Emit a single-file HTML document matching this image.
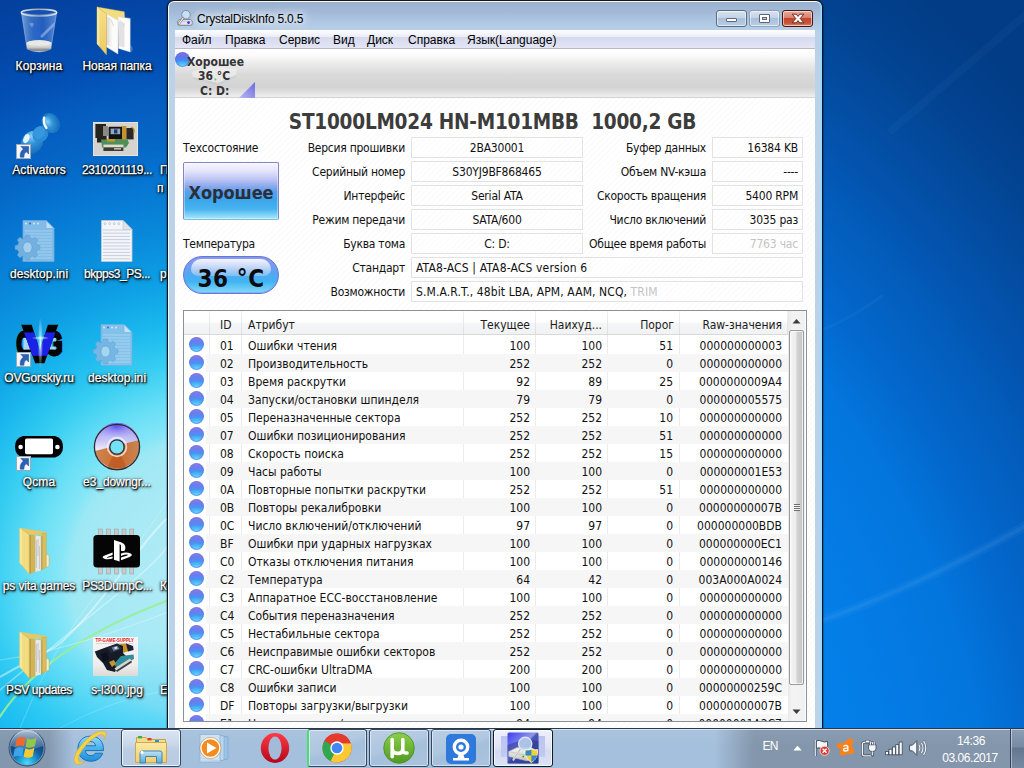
<!DOCTYPE html>
<html lang="ru">
<head>
<meta charset="utf-8">
<title>CrystalDiskInfo 5.0.5</title>
<style>
*{box-sizing:border-box;margin:0;padding:0}
html,body{width:1024px;height:768px;overflow:hidden}
body{position:relative;font-family:"Liberation Sans",sans-serif;font-size:12px;color:#000;background:#0b63c8}
.abs{position:absolute}
/* ---------- wallpaper ---------- */
#wall{position:absolute;left:0;top:0;width:1024px;height:768px;
 background:
  linear-gradient(180deg,rgba(20,190,248,0) 640px,rgba(20,190,248,.45) 740px),
  radial-gradient(circle 640px at 210px 578px,#b4ecf6 0px,#a4e9f5 120px,#9ce8f4 140px,#86e6f7 150px,#69dff6 177px,#38cef2 216px,#1ab8ee 256px,#0e9fe4 300px,#0989da 348px,#0676d2 398px,#0566c6 440px,#055cbf 484px,#034fb4 521px,#0444a4 580px,#033d98 640px);
}
#wallr{position:absolute;left:822px;top:0;width:202px;height:728px;
 background:radial-gradient(circle 1100px at -589px 855px,#0480ea 600px,#047de6 658px,#0375dc 758px,#0367cc 815px,#035bb8 893px,#0358b6 900px,#034696 1016px,#024290 1040px,#023c86 1100px);}
/* ---------- desktop icons ---------- */
.ico{position:absolute;width:90px;text-align:center;color:#fff;font-size:12px;line-height:14px;
 text-shadow:0 1px 2px #000,0 0 3px rgba(0,0,0,.9),1px 1px 2px rgba(0,0,0,.8);letter-spacing:-.2px;white-space:nowrap}
.ico svg{display:block;margin:0 auto}
/* ---------- window ---------- */
#win{position:absolute;left:167px;top:0px;width:656px;height:741px;border-radius:7px 7px 0 0;
 background:linear-gradient(180deg,#9ab1d0 1px,#a1b9d7 10px,#adc6e2 20px,#b8cfe8 29px,#bcd2e8 60px,#bcd2e8 100%);
 border:1px solid #06122a;border-top-color:#161616;box-shadow:inset 1px 0 0 #eaffff,inset 0 1px 0 #f4f8fc,inset -1px 0 0 #96dcf8,inset -2px 0 0 rgba(150,220,248,.55),-1px 0 1px rgba(0,0,0,.25),1px 0 1px rgba(0,0,0,.25)}
/* ---------- title bar ---------- */
#ttl{position:absolute;left:197px;top:11px;font-size:12px;line-height:16px;color:#000;letter-spacing:-.22px;text-shadow:0 0 6px #fff,0 0 10px #fff,0 0 14px rgba(255,255,255,.9)}
.cb{position:absolute;top:10px;height:17px;border:1px solid #5a6b82;border-radius:3px;box-shadow:inset 0 0 0 1px rgba(255,255,255,.55);
 background:linear-gradient(180deg,#d6e2f0 0%,#c3d3e6 45%,#a9bfda 50%,#b9cde6 100%)}
/* ---------- menu ---------- */
#menu{position:absolute;left:175px;top:30px;width:640px;height:19px;border-bottom:1px solid #b8bac6;
 background:linear-gradient(180deg,#ffffff 0px,#f3f4fb 4px,#e9ebf6 7px,#d5d9ed 7px,#dcdff1 12px,#e4e6f6 18px)}
#menu span{position:absolute;top:3px;line-height:15px;font-size:12px;letter-spacing:0}
/* ---------- toolbar ---------- */
#tb{position:absolute;left:175px;top:49px;width:640px;height:49px;border-bottom:1px solid #d2d2d2;
 background:linear-gradient(180deg,#ffffff 0px,#fbfbfb 6px,#ececec 14px,#d9d9d9 26px,#d3d3d3 38px,#e2e2e2 44px,#efefef 48px)}
.tbt{position:absolute;font-family:"DejaVu Sans Condensed","Liberation Sans",sans-serif;font-weight:bold;font-size:12px;line-height:14px;color:#333;white-space:nowrap}
/* ---------- main ---------- */
#main{position:absolute;left:175px;top:98px;width:640px;height:640px;
 background:#fff repeating-linear-gradient(135deg,rgba(0,0,0,0) 0px,rgba(0,0,0,0) 3px,rgba(0,0,0,.017) 3px,rgba(0,0,0,.017) 4.2px)}
.t{font-family:"DejaVu Sans Condensed","Liberation Sans",sans-serif;font-size:12px;white-space:nowrap;color:#111}
#model{position:absolute;left:175px;top:109px;width:640px;text-align:center;font-weight:bold;font-size:20.6px;line-height:26px;color:#3c3c3c;white-space:pre;text-indent:-5px;letter-spacing:-.25px}
.lb{position:absolute;width:160px;text-align:right;line-height:21px;letter-spacing:-.25px;margin-top:1px}
.vb{position:absolute;height:21px;line-height:21px;border:1px solid #e2e2e2;box-shadow:inset 1px 1px 0 rgba(255,255,255,.9),1px 1px 0 rgba(255,255,255,.9);text-align:center;letter-spacing:-.2px}
.vr{text-align:right;padding-right:4px}
.vl{text-align:left;padding-left:4px}
#good{position:absolute;left:183px;top:162px;width:96px;height:58px;border:1px solid #8484c4;border-bottom-color:#74bfe6;border-radius:2px;box-shadow:inset 0 0 0 1px rgba(255,255,255,.35);
 background:linear-gradient(180deg,#f6f5fd 0%,#e8e8fb 12%,#c2c8f4 28%,#93abee 40%,#5e9fe9 50%,#3ca4ea 65%,#45b4f0 82%,#7dd0f6 92%,#b0e6fa 100%);
 text-align:center;font-weight:bold;font-size:18px;line-height:59px;color:#2a2f3c;letter-spacing:-.1px}
#temp{position:absolute;left:183px;top:256px;width:96px;height:38px;border-radius:19px;border:1px solid #6878d6;
 background:linear-gradient(180deg,#8f9cf0 0%,#7d9af0 18%,#55a6f0 45%,#3fb4f3 68%,#86dafb 100%);
 box-shadow:inset 0 0 0 1px rgba(120,150,240,.6);
 text-align:center;font-weight:bold;font-size:24px;line-height:45px;color:#0c0c10;letter-spacing:.6px;overflow:hidden}
#temp:before{content:"";position:absolute;left:7px;top:2px;width:80px;height:17px;border-radius:14px 14px 10px 10px;background:linear-gradient(180deg,rgba(255,255,255,.9),rgba(255,255,255,.25))}
#temp b{position:relative}
/* ---------- table ---------- */
#tbl{position:absolute;left:183px;top:310px;width:624px;height:412px;border:1px solid #8a8f98;background:#fff;overflow:hidden}
#hd{position:absolute;left:0;top:0;width:604px;height:24px;border-bottom:1px solid #d9d9d9;background:linear-gradient(180deg,#fff 0%,#fff 45%,#f4f5f6 55%,#f1f2f4 100%)}
#hd i{position:absolute;top:0;width:1px;height:23px;background:linear-gradient(180deg,#f2f2f2,#dedede)}
#hd span{position:absolute;top:6px;line-height:17px;color:#1c1c1c}
.r{position:absolute;left:0;width:604px;height:18px;line-height:18px}
.r.e:before{content:"";position:absolute;left:22px;top:0;width:582px;height:18px;background:#f6f6f6}
.r span{position:absolute;top:1px;height:18px}
.r u{position:absolute;left:5px;top:1px;width:15px;height:15px;border-radius:50%;
 background:radial-gradient(ellipse 9px 7px at 50% 100%,rgba(110,225,255,.95) 0%,rgba(90,200,250,.5) 55%,rgba(90,200,250,0) 100%),linear-gradient(180deg,#8d7ee8 0%,#6c7dec 28%,#4a92f2 55%,#45aef7 78%,#5ccdfb 100%);box-shadow:inset 0 0 0 1px rgba(110,104,216,.5),inset 0 -1px 1px rgba(80,190,250,.9)}
.c1{left:36px}.c2{left:64px}
.c3{left:280px;width:66px;text-align:right}.c4{left:352px;width:66px;text-align:right}.c5{left:424px;width:65px;text-align:right}.c6{left:496px;width:102px;text-align:right}
#sb{position:absolute;left:604px;top:0;width:17px;height:410px;background:linear-gradient(90deg,#e9e9e9 0,#f3f3f3 4px,#f1f1f1 100%)}
#sb .th{position:absolute;left:1px;top:19px;width:15px;height:355px;border:1px solid #9a9a9a;border-radius:2px;box-shadow:inset 0 0 0 1px rgba(255,255,255,.7);
 background:linear-gradient(90deg,#f6f6f6 0%,#ececec 45%,#d2d2d2 55%,#c6c6c6 100%)}
#sb .gr{position:absolute;left:4px;top:173px;width:6px;height:7px;background:repeating-linear-gradient(180deg,#6b6b6b 0,#6b6b6b 1px,rgba(255,255,255,.8) 1px,rgba(255,255,255,.8) 2px)}
.vline{position:absolute;top:24px;width:1px;height:390px;background:#ececec}

/* ---------- taskbar ---------- */
#task{position:absolute;left:0;top:728px;width:1024px;height:40px;border-top:1px solid #2a3a4a;
 background:linear-gradient(90deg,#8297ad 0px,#8398af 48px,#a5c0dc 74px,#a5c0dc 714px,#8396ac 754px,#8396ac 1024px);
 box-shadow:inset 0 1px 0 rgba(225,235,248,.85)}
#task:after{content:"";position:absolute;left:0;top:1px;width:1024px;height:38px;background:linear-gradient(180deg,rgba(255,255,255,.05) 0,rgba(255,255,255,0) 45%)}
.tbn{position:absolute;top:729px;width:60px;height:38px;border:1px solid #35465e;border-radius:3px;box-shadow:inset 0 0 0 1px rgba(255,255,255,.5);
 background:linear-gradient(160deg,rgba(255,255,255,.2) 0%,rgba(255,255,255,.1) 45%,rgba(255,255,255,.0) 55%,rgba(255,255,255,.06) 100%)}
.tbn.act{background:linear-gradient(180deg,#dbe5f2 0%,#c8d7ea 40%,#bacde4 58%,#b8cbe3 100%);box-shadow:inset 0 0 0 1px rgba(255,255,255,.75)}
.tray{position:absolute;color:#fff;font-size:12px;white-space:nowrap;text-align:center;letter-spacing:-.2px}

.lbl{position:absolute;width:100px;text-align:center;color:#fff;font-size:12px;line-height:15px;white-space:nowrap;letter-spacing:0;-webkit-text-stroke:.25px #fff;
 text-shadow:1px 1px 1px rgba(0,0,0,.95),0 1px 2px rgba(0,0,0,.9),0 0 3px rgba(0,0,0,.8),1px 2px 3px rgba(0,0,0,.6)}
.sc{position:absolute;width:15px;height:15px;background:#f4f7fb;border:1px solid #9aa9bb}
</style>
</head>
<body>
<div id="wall"></div>
<div id="wallr"></div>
<!-- wallpaper streaks -->
<svg class="abs" style="left:0;top:380px" width="168" height="348" viewBox="0 380 168 348"><g fill="none" stroke-linecap="round"><path d="M-1 718 C38 658 108 623 169 600" stroke="#98ee96" stroke-width="2.2" opacity=".9"/><path d="M0 677 Q30 660 50 650 T120 575 T168 520" stroke="#fff" stroke-width="2" opacity=".45"/><path d="M0 690 Q60 640 110 600 T168 545" stroke="#fff" stroke-width="1.4" opacity=".4"/><path d="M20 728 Q50 650 100 590 T168 500" stroke="#fff" stroke-width="1" opacity=".22"/><path d="M0 660 Q70 650 168 612" stroke="#fff" stroke-width="1.2" opacity=".28"/><path d="M60 728 Q110 700 168 690" stroke="#fff" stroke-width="1" opacity=".18"/></g></svg>
<svg class="abs" style="left:822px;top:0" width="202" height="728" viewBox="0 0 202 728"><g fill="none" stroke="#9fd0ff" stroke-linecap="round"><path d="M-5 622 Q90 590 207 524" stroke-width="10" opacity=".05"/><path d="M-5 622 Q90 590 207 524" stroke-width="4" opacity=".08"/><path d="M70 130 Q140 70 207 12" stroke-width="8" opacity=".04"/><path d="M0 330 Q30 318 60 296" stroke-width="3" opacity=".05"/></g></svg>
<svg class="abs" style="left:18px;top:6px" width="42" height="50" viewBox="0 0 42 50"><defs><linearGradient id="rb" x1="0" y1="0" x2="1" y2="0"><stop offset="0" stop-color="#a9c6ee" stop-opacity=".7"/><stop offset=".25" stop-color="#5d8fdc" stop-opacity=".6"/><stop offset=".6" stop-color="#3a72d2" stop-opacity=".55"/><stop offset="1" stop-color="#7ea6e4" stop-opacity=".7"/></linearGradient><linearGradient id="rbm" x1="0" y1="0" x2="0" y2="1"><stop offset="0" stop-color="#f4f4f2"/><stop offset=".6" stop-color="#cfd0ce"/><stop offset=".85" stop-color="#7c7f84"/><stop offset="1" stop-color="#d8dadc"/></linearGradient><linearGradient id="rim" x1="0" y1="0" x2="1" y2="0"><stop offset="0" stop-color="#e6eaee"/><stop offset=".5" stop-color="#9aa4b0"/><stop offset="1" stop-color="#e6eaee"/></linearGradient></defs>
<path d="M3.4 6.6 L9.2 43 Q21 48.8 32.8 43 L38.6 6.6 Q21 11.6 3.4 6.6Z" fill="url(#rb)" stroke="#9dbbe6" stroke-width=".6"/><path d="M22 30 L36.6 16 L36 20 L24 32Z" fill="#c9dcf6" opacity=".45"/><path d="M12.6 20 Q16 16.4 18.6 20.6 Q22.6 22.6 22.4 27 Q24 30.6 21 33 L14.6 33 Q15.6 27 12.6 20Z" fill="#2a62c8" opacity=".6"/><path d="M11 17.6 Q14 15.6 16 18 L14 22Z" fill="#9cc0f0" opacity=".5"/>
<path d="M8.4 36.6 Q21 32 33.6 36.6 L32.8 43 Q21 48.8 9.2 43Z" fill="url(#rbm)"/><ellipse cx="21" cy="37" rx="12.2" ry="2.8" fill="#e9e9e6"/>
<ellipse cx="21" cy="6.6" rx="17.7" ry="3.4" fill="#3f78d2" fill-opacity=".3" stroke="url(#rim)" stroke-width="1.5"/></svg>
<div class="lbl" style="left:-11px;top:59px;letter-spacing:0.18px">Корзина</div>
<svg class="abs" style="left:95px;top:5px" width="42" height="52" viewBox="0 0 42 52"><defs><linearGradient id="fy" x1="0" y1="0" x2="0" y2="1"><stop offset="0" stop-color="#f6e08a"/><stop offset="1" stop-color="#eccb62"/></linearGradient><linearGradient id="pp" x1="0" y1="0" x2="1" y2="0"><stop offset="0" stop-color="#d9d7d5"/><stop offset=".5" stop-color="#f1f0ef"/><stop offset="1" stop-color="#ffffff"/></linearGradient></defs>
<path d="M2 2 L29.3 6.7 L29.7 13 L23 12 V16 L11.75 9.4Z" fill="#f3dc80" stroke="#dcc05c" stroke-width=".4"/>
<path d="M23 11.8 L35.2 13.4 V47 L23.5 43.4Z" fill="#fdfdfd" stroke="#dcdcdc" stroke-width=".4"/><path d="M24 16 L29.4 18.4 V42.6 L24 41Z" fill="#e3e2e0"/><path d="M24.4 15 Q28 17 29.4 21" stroke="#c9c8c6" stroke-width=".6" fill="none"/>
<path d="M11.75 9 L23 15.3 V49 L11.4 41.9Z" fill="#fbfbfa" stroke="#d6d6d6" stroke-width=".4"/><path d="M12.4 12 L18.6 16.6 V43.6 L12 39.6Z" fill="url(#pp)"/><path d="M13.6 12.4 Q17.4 16 18.6 21" stroke="#c4c2c0" stroke-width=".6" fill="none"/>
<path d="M2 2 L11.75 9 L11.4 49.7 L2 38.75Z" fill="url(#fy)" stroke="#dcbc54" stroke-width=".5"/><path d="M2 2 L4.4 3.8 V41.4 L2 38.75Z" fill="#faeca4" opacity=".8"/><path d="M35.2 40 Q40 43 36 47.6 L35.2 47Z" fill="#9cc4f0" opacity=".35"/></svg>
<div class="lbl" style="left:67px;top:59px;letter-spacing:-0.09px">Новая папка</div>
<svg class="abs" style="left:14px;top:110px" width="50" height="50" viewBox="0 0 50 50"><defs><radialGradient id="pn" cx=".3" cy=".3" r=".85"><stop offset="0" stop-color="#8fd0f4"/><stop offset=".4" stop-color="#2f93da"/><stop offset="1" stop-color="#1468b2"/></radialGradient></defs>
<ellipse cx="18" cy="32.6" rx="10.4" ry="12.6" transform="rotate(38 18 32.6)" fill="url(#pn)"/><ellipse cx="12.4" cy="28.6" rx="2.8" ry="4.8" transform="rotate(24 12.4 28.6)" fill="#f2faff" opacity=".92"/>
<ellipse cx="26.4" cy="24" rx="7.6" ry="8.6" transform="rotate(38 26.4 24)" fill="#2a8cd4"/><ellipse cx="25" cy="22.6" rx="5.6" ry="6.6" transform="rotate(38 25 22.6)" fill="#3a9ade" opacity=".8"/>
<ellipse cx="36.6" cy="13" rx="8.6" ry="10.6" transform="rotate(-32 36.6 13)" fill="#1f7cc6"/><ellipse cx="37.8" cy="13.4" rx="7" ry="9.4" transform="rotate(-32 37.8 13.4)" fill="url(#pn)"/><path d="M30.2 7.6 Q28.8 13 32.4 18" stroke="#f2faff" stroke-width="2.4" stroke-linecap="round" fill="none"/></svg>
<div class="sc" style="left:16px;top:144px"><svg width="13" height="13" viewBox="0 0 13 13" style="display:block"><path d="M3.8 1.4 H11.6 V9 L9.4 6.8 Q6.6 8.6 6.9 12.2 H3.3 Q2.6 6.8 6.4 4 Z" fill="#2b62b8" stroke="#1a4288" stroke-width=".5"/></svg></div>
<div class="lbl" style="left:-11px;top:163px;letter-spacing:0.08px">Activators</div>
<svg class="abs" style="left:93px;top:122px" width="45" height="34" viewBox="0 0 45 34"><rect width="45" height="34" fill="#d5d3d0" stroke="#f4f4f4" stroke-width="1"/><path d="M2.4 2 H13 V7 H10 V13 H13.6 V20.4 H4 V16 H2.4Z" fill="#24231f"/><path d="M10 4 H15 V14 H10Z" fill="#8a8880"/><rect x="15.6" y="4.8" width="15.6" height="12.8" rx="1" fill="#121210"/><rect x="17.6" y="6.6" width="9.6" height="5.6" fill="#8fa6c4"/><rect x="21" y="7.4" width="3.4" height="4" fill="#27376a"/><rect x="29" y="4" width="4.4" height="14" fill="#c6932c"/><path d="M33.4 6 H40.6 V17.4 H33.4Z" fill="#2b2723"/><path d="M38 5 Q42 6 41 11" stroke="#c6932c" stroke-width="1.2" fill="none"/><path d="M8 17.4 H34.6 L36 21 L33 25.4 H9 Z" fill="#4f9058"/><path d="M14 17 H22 V19.6 H14Z" fill="#c6932c"/><rect x="10.4" y="22.6" width="20" height="3" fill="#e0ddd2"/><rect x="10.4" y="25.4" width="20" height="3.6" fill="#3a3a34"/><rect x="21" y="26" width="7" height="1.6" fill="#b9b9b2"/></svg>
<div class="lbl" style="left:67px;top:163px;letter-spacing:-0.38px">2310201119...</div>
<svg class="abs" style="left:14px;top:219px" width="42" height="44" viewBox="0 0 42 44" opacity=".9"><path d="M9 1.5 H32 L40 9.5 V42.5 H9Z" fill="#8fc3ea" stroke="#78afdd" stroke-width=".8"/><path d="M32 1.5 V9.5 H40Z" fill="#d7e9f7" stroke="#78afdd" stroke-width=".6"/><g stroke="#b9daf2" stroke-width=".9"><path d="M11 12 H38 M11 15 H38 M11 18 H38 M11 21 H38 M11 24 H38 M11 27 H38 M11 30 H38 M11 33 H38 M11 36 H38 M11 39 H38"/></g><g fill="#e8f3fb"><circle cx="12" cy="4.6" r="1"/><circle cx="16" cy="4.6" r="1" fill="#2a6fd0"/><circle cx="20" cy="4.6" r="1"/><circle cx="24" cy="4.6" r="1"/></g>
<g transform="translate(13.5 28.5)"><path d="M-1.8 -12.4 H1.8 L2.6 -9.6 L5 -8.6 L7.6 -10.2 L10.2 -7.6 L8.6 -5 L9.6 -2.6 L12.4 -1.8 V1.8 L9.6 2.6 L8.6 5 L10.2 7.6 L7.6 10.2 L5 8.6 L2.6 9.6 L1.8 12.4 H-1.8 L-2.6 9.6 L-5 8.6 L-7.6 10.2 L-10.2 7.6 L-8.6 5 L-9.6 2.6 L-12.4 1.8 V-1.8 L-9.6 -2.6 L-8.6 -5 L-10.2 -7.6 L-7.6 -10.2 L-5 -8.6 L-2.6 -9.6Z" fill="#7fb6e2" stroke="#6aa4d6" stroke-width=".6"/><ellipse cx="0" cy="0" rx="4.6" ry="5.6" fill="#b5d8f2" stroke="#6aa4d6" stroke-width=".8"/></g></svg>
<div class="lbl" style="left:-11px;top:267px;letter-spacing:0.08px">desktop.ini</div>
<svg class="abs" style="left:100px;top:219px" width="34" height="44" viewBox="0 0 34 44"><path d="M1.5 1.5 H23 L32 10.5 V42.5 H1.5Z" fill="#f3f5f8" stroke="#c3cad3" stroke-width=".8"/><path d="M23 1.5 V10.5 H32Z" fill="#dfe4ea" stroke="#b9c1cb" stroke-width=".6"/><g stroke="#c7cfdc" stroke-width="1"><path d="M3 11 H30 M3 14.2 H30 M3 17.4 H30 M3 20.6 H30 M3 23.8 H30 M3 27 H30 M3 30.2 H30 M3 33.4 H30 M3 36.6 H30 M3 39.8 H30"/></g><g fill="none" stroke="#aab3bf" stroke-width=".6"><circle cx="5" cy="4.6" r="1"/><circle cx="9.6" cy="4.6" r="1"/><circle cx="14.2" cy="4.6" r="1"/><circle cx="18.8" cy="4.6" r="1"/></g></svg>
<div class="lbl" style="left:67px;top:267px;letter-spacing:-0.45px">bkpps3_PS...</div>
<svg class="abs" style="left:14px;top:316px" width="52" height="54" viewBox="0 0 52 54"><defs><radialGradient id="glow" cx=".5" cy=".5" r=".5"><stop offset="0" stop-color="#fff" stop-opacity=".95"/><stop offset=".4" stop-color="#dff" stop-opacity=".5"/><stop offset="1" stop-color="#fff" stop-opacity="0"/></radialGradient><clipPath id="band"><rect x="0" y="16.4" width="52" height="23.4"/></clipPath></defs>
<g font-family="Liberation Sans, sans-serif" font-weight="bold" stroke-linejoin="miter">
<text transform="translate(2.6 39.4) scale(.66 1)" font-size="33" fill="#040404" stroke="#040404" stroke-width="3.2">O</text>
<text transform="translate(31.4 39.4) scale(.66 1)" font-size="33" fill="#040404" stroke="#040404" stroke-width="3.2">G</text>
<rect x="9.4" y="22" width="8.4" height="11.6" fill="#a6d4f4"/><path d="M34 22 H41.8 V25.4 H37.6 V30.4 H41.8 V33.6 H34Z" fill="#a6d4f4"/>
<text x="8.8" y="46" font-size="51" fill="#040404" stroke="#040404" stroke-width="2.6">V</text>
<text x="8.8" y="46" font-size="51" fill="#1a22e6" stroke="#1a22e6" stroke-width="2.6" clip-path="url(#band)">V</text></g>
<ellipse cx="26.4" cy="27" rx="2.6" ry="26" fill="url(#glow)"/><ellipse cx="26.4" cy="22" rx="9" ry="2" fill="url(#glow)"/></svg>
<div class="sc" style="left:16px;top:352px"><svg width="13" height="13" viewBox="0 0 13 13" style="display:block"><path d="M3.8 1.4 H11.6 V9 L9.4 6.8 Q6.6 8.6 6.9 12.2 H3.3 Q2.6 6.8 6.4 4 Z" fill="#2b62b8" stroke="#1a4288" stroke-width=".5"/></svg></div>
<div class="lbl" style="left:-11px;top:371px;letter-spacing:-0.14px">OVGorskiy.ru</div>
<svg class="abs" style="left:92px;top:323px" width="42" height="44" viewBox="0 0 42 44" opacity=".9"><path d="M9 1.5 H32 L40 9.5 V42.5 H9Z" fill="#8fc3ea" stroke="#78afdd" stroke-width=".8"/><path d="M32 1.5 V9.5 H40Z" fill="#d7e9f7" stroke="#78afdd" stroke-width=".6"/><g stroke="#b9daf2" stroke-width=".9"><path d="M11 12 H38 M11 15 H38 M11 18 H38 M11 21 H38 M11 24 H38 M11 27 H38 M11 30 H38 M11 33 H38 M11 36 H38 M11 39 H38"/></g><g fill="#e8f3fb"><circle cx="12" cy="4.6" r="1"/><circle cx="16" cy="4.6" r="1" fill="#2a6fd0"/><circle cx="20" cy="4.6" r="1"/><circle cx="24" cy="4.6" r="1"/></g>
<g transform="translate(13.5 28.5)"><path d="M-1.8 -12.4 H1.8 L2.6 -9.6 L5 -8.6 L7.6 -10.2 L10.2 -7.6 L8.6 -5 L9.6 -2.6 L12.4 -1.8 V1.8 L9.6 2.6 L8.6 5 L10.2 7.6 L7.6 10.2 L5 8.6 L2.6 9.6 L1.8 12.4 H-1.8 L-2.6 9.6 L-5 8.6 L-7.6 10.2 L-10.2 7.6 L-8.6 5 L-9.6 2.6 L-12.4 1.8 V-1.8 L-9.6 -2.6 L-8.6 -5 L-10.2 -7.6 L-7.6 -10.2 L-5 -8.6 L-2.6 -9.6Z" fill="#7fb6e2" stroke="#6aa4d6" stroke-width=".6"/><ellipse cx="0" cy="0" rx="4.6" ry="5.6" fill="#b5d8f2" stroke="#6aa4d6" stroke-width=".8"/></g></svg>
<div class="lbl" style="left:67px;top:371px;letter-spacing:0.08px">desktop.ini</div>
<svg class="abs" style="left:14px;top:434px" width="50" height="26" viewBox="0 0 50 26"><path d="M9 2 H41 Q49 4 49 13 Q49 21 41 23.6 H9 Q1 21 1 13 Q1 4 9 2Z" fill="#000"/><rect x="11" y="4.6" width="28" height="15.6" rx="1.6" fill="#fff"/><circle cx="6.6" cy="13" r="2.3" fill="#fff"/><circle cx="43.4" cy="13" r="2.3" fill="#fff"/></svg>
<div class="sc" style="left:16px;top:456px"><svg width="13" height="13" viewBox="0 0 13 13" style="display:block"><path d="M3.8 1.4 H11.6 V9 L9.4 6.8 Q6.6 8.6 6.9 12.2 H3.3 Q2.6 6.8 6.4 4 Z" fill="#2b62b8" stroke="#1a4288" stroke-width=".5"/></svg></div>
<div class="lbl" style="left:-11px;top:475px;letter-spacing:0.1px">Qcma</div>
<svg class="abs" style="left:93px;top:423px" width="48" height="48" viewBox="0 0 48 48"><defs><linearGradient id="d1" x1="0" y1="0" x2="0" y2="1"><stop offset="0" stop-color="#6a5df0"/><stop offset=".5" stop-color="#b9b4f4"/><stop offset="1" stop-color="#f3f1fb"/></linearGradient><linearGradient id="d2" x1="0" y1="0" x2="1" y2="0"><stop offset="0" stop-color="#c98a5a"/><stop offset=".5" stop-color="#d2682a"/><stop offset="1" stop-color="#c48858"/></linearGradient><radialGradient id="d3" cx=".5" cy=".1" r=".6"><stop offset="0" stop-color="#5b4bf0"/><stop offset="1" stop-color="#fff" stop-opacity="0"/></radialGradient></defs>
<circle cx="24" cy="24" r="22.6" fill="#f2f0fa"/><path d="M2 28 A22.6 22.6 0 0 1 46 17 L24 24Z" fill="url(#d1)"/><path d="M2 28 A22.6 22.6 0 0 1 46 17 L24 24Z" fill="url(#d3)"/><path d="M1.8 28 L46.2 17 A22.6 22.6 0 0 1 1.8 28Z" fill="url(#d2)"/><path d="M24 24 L14 45 A22.6 22.6 0 0 0 34 45Z" fill="#b5521c" opacity=".55"/><circle cx="24" cy="24" r="22.6" fill="none" stroke="#2c2c30" stroke-width="1.3"/><circle cx="24" cy="24" r="9.4" fill="none" stroke="#f4f2fb" stroke-width="1.6" opacity=".8"/><circle cx="24" cy="24" r="7.2" fill="#74e1f6" stroke="#2c2c30" stroke-width="1.3"/></svg>
<div class="lbl" style="left:67px;top:475px;letter-spacing:-0.08px">e3_downgr...</div>
<svg class="abs" style="left:17px;top:526px" width="34" height="50" viewBox="0 0 34 50"><path d="M2.7 1.8 L29.3 6.1 V9.4 L12.1 8.8Z" fill="#e4c766"/><path d="M25.4 7 L29.3 7.6 V41 L25.4 43.4Z" fill="#dcbc5c" stroke="#c4a248" stroke-width=".4"/><path d="M29.3 28 L32 29.6 V40 L29.3 41.4Z" fill="#f6eec8" stroke="#c8a850" stroke-width=".5"/><path d="M23.8 10.2 L25.6 10.4 V44 L23.8 44.6Z" fill="#c8a64a"/><path d="M18.3 9.6 L23.8 10.2 V44.6 L18.3 46Z" fill="#ebe9e8"/><path d="M19.4 14 V42 M21 13 V30 M22.4 20 V43" stroke="#a9aab4" stroke-width=".7" opacity=".8"/><path d="M12.1 8.8 L18.3 9.4 V46 L12.1 47.9Z" fill="#d4b256"/><path d="M12.1 8.8 L14 9 V47.3 L12.1 47.9Z" fill="#b9963e" opacity=".7"/><path d="M2.7 1.8 L12.1 8.8 V47.9 L2.7 37Z" fill="#f2dd82" stroke="#dcbc54" stroke-width=".5"/><path d="M2.7 1.8 L5 3.6 V39.6 L2.7 37Z" fill="#f8ea9e" opacity=".8"/></svg>
<div class="lbl" style="left:-11px;top:579px;letter-spacing:-0.13px">ps vita games</div>
<svg class="abs" style="left:92px;top:528px" width="50" height="47" viewBox="0 0 50 47"><g fill="#c9c9c9" stroke="#9a9a9a" stroke-width=".5"><rect x="6.6" y="1" width="4" height="45"/><rect x="14.4" y="1" width="4" height="45"/><rect x="22.2" y="1" width="4" height="45"/><rect x="30" y="1" width="4" height="45"/><rect x="37.8" y="1" width="4" height="45"/></g><rect x="1.4" y="7" width="46.6" height="32.6" rx="3.6" fill="#050505"/>
<path d="M22 12 L29.6 14.4 Q33.6 16 33.4 20.4 Q33 24 29 22.8 V17.6 Q28.8 16.4 27.6 16.2 V33.6 L22 31.8Z" fill="#fff"/><path d="M20.6 24.6 L12 27.8 Q9 29.4 12.4 30.8 Q16 32 20.6 30.6 V28.4 L15.6 29.8 Q14 29.8 15.4 29 L20.6 27Z" fill="#fff"/><path d="M29 25.4 Q34.6 23.6 38.6 25.6 Q41.6 27.4 37.6 29 L29 32.2 V29.6 L35.4 27.4 Q36.4 26.8 35 26.6 Q32.6 26.6 29 28Z" fill="#fff"/></svg>
<div class="lbl" style="left:67px;top:579px;letter-spacing:-0.35px">PS3DumpC...</div>
<svg class="abs" style="left:17px;top:630px" width="34" height="50" viewBox="0 0 34 50"><path d="M2.7 1.8 L29.3 6.1 V9.4 L12.1 8.8Z" fill="#e4c766"/><path d="M25.4 7 L29.3 7.6 V41 L25.4 43.4Z" fill="#dcbc5c" stroke="#c4a248" stroke-width=".4"/><path d="M29.3 28 L32 29.6 V40 L29.3 41.4Z" fill="#f6eec8" stroke="#c8a850" stroke-width=".5"/><path d="M23.8 10.2 L25.6 10.4 V44 L23.8 44.6Z" fill="#c8a64a"/><path d="M18.3 9.6 L23.8 10.2 V44.6 L18.3 46Z" fill="#ebe9e8"/><path d="M19.4 14 V42 M21 13 V30 M22.4 20 V43" stroke="#a9aab4" stroke-width=".7" opacity=".8"/><path d="M12.1 8.8 L18.3 9.4 V46 L12.1 47.9Z" fill="#d4b256"/><path d="M12.1 8.8 L14 9 V47.3 L12.1 47.9Z" fill="#b9963e" opacity=".7"/><path d="M2.7 1.8 L12.1 8.8 V47.9 L2.7 37Z" fill="#f2dd82" stroke="#dcbc54" stroke-width=".5"/><path d="M2.7 1.8 L5 3.6 V39.6 L2.7 37Z" fill="#f8ea9e" opacity=".8"/></svg>
<div class="lbl" style="left:-11px;top:683px;letter-spacing:-0.37px">PSV updates</div>
<svg class="abs" style="left:93px;top:637px" width="45" height="39" viewBox="0 0 45 39"><defs><linearGradient id="tbg" x1="0" y1="0" x2="0" y2="1"><stop offset="0" stop-color="#f8f7f5"/><stop offset=".7" stop-color="#efeeec"/><stop offset="1" stop-color="#dcdad7"/></linearGradient></defs><rect width="45" height="39" fill="url(#tbg)"/><text x="2.6" y="5.4" font-family="Liberation Sans, sans-serif" font-weight="bold" font-size="4.8" fill="#e02222" textLength="38.4" lengthAdjust="spacingAndGlyphs">TP-GAME-SUPPLY</text><path d="M3 6.6 H40" stroke="#b9b4b0" stroke-width=".5"/>
<path d="M27 7 L34 6.4 L36 14 L30 16Z" fill="#c8922a"/><path d="M33 6.4 L40 9 L40.6 13 L35 14.6Z" fill="#1c2130"/>
<path d="M1.8 14.6 L14 10 L24 6.6 L30 9 L30 16 L34 20 L26 27 L22 35 L14 33 L10 26 L4 20Z" fill="#161b28"/><path d="M14 10.4 L25 7 L29 12 L18 16.6Z" fill="#232a3c"/><path d="M18.6 10.6 L24.4 8.8 L26.4 12 L20.6 14Z" fill="#6c7f98"/><path d="M21 10.4 L23.6 9.6 L24.6 11.4 L22 12.2Z" fill="#dfe6ee"/><path d="M8 17 L14 15 L16 22 L10 25Z" fill="#0d111b"/>
<path d="M28 19 L40.6 17.6 L41 22 L30 27 L24 31 L21 27Z" fill="#2f8e9c"/><path d="M16 25 L21 23 L23 27 L19 30Z" fill="#c8922a"/><path d="M21.6 31.2 L37 21.4 L38.4 23.6 L23 33.6Z" fill="#d9d6cc"/><path d="M23 33.6 L38.4 23.6 L38.8 25.4 L24 35Z" fill="#3b3f44"/></svg>
<div class="lbl" style="left:67px;top:683px;letter-spacing:-0.03px">s-l300.jpg</div>
<div class="lbl" style="left:160px;top:163px;width:auto;text-align:left">П</div>
<div class="lbl" style="left:160px;top:267px;width:auto;text-align:left">р</div>
<div class="lbl" style="left:160px;top:579px;width:auto;text-align:left">К</div>
<div class="lbl" style="left:160px;top:683px;width:auto;text-align:left">Е</div>
<div class="lbl" style="left:157px;top:181px;width:auto;text-align:left">п</div>
<div id="win"></div>
<svg class="abs" style="left:177px;top:10px" width="16" height="16" viewBox="0 0 16 16"><path d="M.8 13.8 V11 L2.6 9.4 H13.4 L15.2 11 V13.8 Q15.2 15.3 13.8 15.3 H2.2 Q.8 15.3 .8 13.8Z" fill="#e6e4ea" stroke="#787884" stroke-width=".9"/><path d="M1.2 11.2 H14.8" stroke="#b9b9c4" stroke-width=".6"/><circle cx="11.6" cy="12.6" r="1.35" fill="#2a2cf0"/><circle cx="9" cy="4.7" r="4.3" fill="#cfe4f8" fill-opacity=".85" stroke="#7e8ca4" stroke-width="1"/><path d="M6.2 8 L2 13.6" stroke="#6f7480" stroke-width="2.2" stroke-linecap="round"/><path d="M6.2 8 L2 13.6" stroke="#f4f4f6" stroke-width="1.1" stroke-linecap="round"/></svg>
<div id="ttl">CrystalDiskInfo 5.0.5</div>
<div class="cb" style="left:716px;width:31px"><div class="abs" style="left:9px;top:7px;width:11px;height:4px;background:#fff;border:1px solid #5b6678;border-radius:1px"></div></div>
<div class="cb" style="left:749px;width:31px;border-color:rgba(90,107,130,.5)"><div class="abs" style="left:9px;top:3px;width:11px;height:9px;background:#fff;border:1px solid #5b6678;border-radius:1px"><div class="abs" style="left:2px;top:2px;width:5px;height:3px;border:1px solid #5b6678;background:#c3d3e6"></div></div></div>
<div class="cb" style="left:782px;width:31px;border-color:#4a1710;background:linear-gradient(180deg,#e9a99b 0%,#d9826f 45%,#c4452d 50%,#c8543a 80%,#d9866b 100%)"><svg class="abs" style="left:8px;top:2px" width="14" height="11" viewBox="0 0 14 11"><path d="M1.2 1.2 H5.2 L7 3.4 L8.8 1.2 H12.8 L9.2 5.5 L12.8 9.8 H8.8 L7 7.6 L5.2 9.8 H1.2 L4.8 5.5 Z" fill="#fff" stroke="#5a2018" stroke-width=".9"/></svg></div>
<div id="menu"><span style="left:7px">Файл</span><span style="left:50px">Правка</span><span style="left:104px">Сервис</span><span style="left:158px">Вид</span><span style="left:192px">Диск</span><span style="left:233px">Справка</span><span style="left:292px">Язык(Language)</span></div>
<div id="tb"></div>
<div class="abs" style="left:175px;top:52px;width:15px;height:15px;border-radius:50%;background:radial-gradient(ellipse 9px 7px at 50% 100%,rgba(110,225,255,.95) 0%,rgba(90,200,250,.5) 55%,rgba(90,200,250,0) 100%),linear-gradient(180deg,#8674e6 0%,#6573ea 28%,#4389f1 55%,#3fa8f6 78%,#52c8fa 100%);box-shadow:inset 0 0 0 1px rgba(104,96,214,.6)"></div>
<svg class="abs" style="left:190px;top:66px" width="50" height="20" viewBox="0 0 50 20"><path d="M2 6 L20 1 L47 3 L46 9 L28 17 L3 11Z" fill="#f4f4f4" opacity=".55"/><path d="M3 11 L28 17 L46 9 L46 11.6 L28 19.4 L3 13.4Z" fill="#c9c9c9" opacity=".5"/><circle cx="25.4" cy="13.4" r="1.1" fill="#5fbf4f" opacity=".8"/></svg>
<div class="tbt" style="left:187px;top:55px">Хорошее</div>
<div class="tbt" style="left:198px;top:69px">36 °C</div>
<div class="tbt" style="left:200px;top:84px">C: D:</div>
<svg class="abs" style="left:239px;top:82px" width="16" height="16" viewBox="0 0 16 16"><defs><linearGradient id="tg" x1="0" y1="1" x2="1" y2="0"><stop offset="0" stop-color="#b9b9ee"/><stop offset="1" stop-color="#6a6adf"/></linearGradient></defs><path d="M0 16 L16 16 L16 0 Z" fill="url(#tg)"/></svg>
<div id="main"></div>
<div id="model" class="t">ST1000LM024 HN-M101MBB  1000,2 GB</div>
<div class="t lb" style="left:99px;top:137px;text-align:left;left:183px">Техсостояние</div>
<div id="good" class="t">Хорошее</div>
<div class="t lb" style="left:183px;top:233px;text-align:left">Температура</div>
<div id="temp" class="t"><b>36 °C</b></div>
<div class="t lb" style="left:245px;top:137px">Версия прошивки</div><div class="t vb" style="left:411px;top:137px;width:172px">2BA30001</div><div class="t lb" style="left:546px;top:137px">Буфер данных</div><div class="t vb vr" style="left:712px;top:137px;width:91px"><span>16384 KB</span></div>
<div class="t lb" style="left:245px;top:161px">Серийный номер</div><div class="t vb" style="left:411px;top:161px;width:172px">S30YJ9BF868465</div><div class="t lb" style="left:546px;top:161px">Объем NV-кэша</div><div class="t vb vr" style="left:712px;top:161px;width:91px"><span>----</span></div>
<div class="t lb" style="left:245px;top:185px">Интерфейс</div><div class="t vb" style="left:411px;top:185px;width:172px">Serial ATA</div><div class="t lb" style="left:546px;top:185px">Скорость вращения</div><div class="t vb vr" style="left:712px;top:185px;width:91px"><span>5400 RPM</span></div>
<div class="t lb" style="left:245px;top:209px">Режим передачи</div><div class="t vb" style="left:411px;top:209px;width:172px">SATA/600</div><div class="t lb" style="left:546px;top:209px">Число включений</div><div class="t vb vr" style="left:712px;top:209px;width:91px"><span>3035 раз</span></div>
<div class="t lb" style="left:245px;top:233px">Буква тома</div><div class="t vb" style="left:411px;top:233px;width:172px">C: D:</div><div class="t lb" style="left:546px;top:233px">Общее время работы</div><div class="t vb vr" style="left:712px;top:233px;width:91px"><span style="color:#c4c4c4">7763 час</span></div>
<div class="t lb" style="left:245px;top:257px">Стандарт</div><div class="t vb vl" style="left:411px;top:257px;width:392px;letter-spacing:.15px;word-spacing:0">ATA8-ACS | ATA8-ACS version 6</div>
<div class="t lb" style="left:245px;top:281px">Возможности</div><div class="t vb vl" style="left:411px;top:281px;width:392px;letter-spacing:.1px">S.M.A.R.T., 48bit LBA, APM, AAM, NCQ, <span style="color:#c4c4c4">TRIM</span></div>
<div id="tbl" class="t"><div id="hd"><i style="left:25px"></i><i style="left:57px"></i><i style="left:279px"></i><i style="left:351px"></i><i style="left:423px"></i><i style="left:495px"></i><i style="left:603px"></i><span class="c1">ID</span><span class="c2">Атрибут</span><span class="c3">Текущее</span><span class="c4">Наихуд...</span><span class="c5" style="width:66px">Порог</span><span class="c6">Raw-значения</span></div>
<div class="vline" style="left:25px"></div><div class="vline" style="left:57px"></div><div class="vline" style="left:279px"></div><div class="vline" style="left:351px"></div><div class="vline" style="left:423px"></div><div class="vline" style="left:495px"></div>
<div class="r" style="top:25px"><u></u><span class="c1">01</span><span class="c2">Ошибки чтения</span><span class="c3">100</span><span class="c4">100</span><span class="c5">51</span><span class="c6">000000000003</span></div>
<div class="r e" style="top:43px"><u></u><span class="c1">02</span><span class="c2">Производительность</span><span class="c3">252</span><span class="c4">252</span><span class="c5">0</span><span class="c6">000000000000</span></div>
<div class="r" style="top:61px"><u></u><span class="c1">03</span><span class="c2">Время раскрутки</span><span class="c3">92</span><span class="c4">89</span><span class="c5">25</span><span class="c6">0000000009A4</span></div>
<div class="r e" style="top:79px"><u></u><span class="c1">04</span><span class="c2">Запуски/остановки шпинделя</span><span class="c3">79</span><span class="c4">79</span><span class="c5">0</span><span class="c6">000000005575</span></div>
<div class="r" style="top:97px"><u></u><span class="c1">05</span><span class="c2">Переназначенные сектора</span><span class="c3">252</span><span class="c4">252</span><span class="c5">10</span><span class="c6">000000000000</span></div>
<div class="r e" style="top:115px"><u></u><span class="c1">07</span><span class="c2">Ошибки позиционирования</span><span class="c3">252</span><span class="c4">252</span><span class="c5">51</span><span class="c6">000000000000</span></div>
<div class="r" style="top:133px"><u></u><span class="c1">08</span><span class="c2">Скорость поиска</span><span class="c3">252</span><span class="c4">252</span><span class="c5">15</span><span class="c6">000000000000</span></div>
<div class="r e" style="top:151px"><u></u><span class="c1">09</span><span class="c2">Часы работы</span><span class="c3">100</span><span class="c4">100</span><span class="c5">0</span><span class="c6">000000001E53</span></div>
<div class="r" style="top:169px"><u></u><span class="c1">0A</span><span class="c2">Повторные попытки раскрутки</span><span class="c3">252</span><span class="c4">252</span><span class="c5">51</span><span class="c6">000000000000</span></div>
<div class="r e" style="top:187px"><u></u><span class="c1">0B</span><span class="c2">Повторы рекалибровки</span><span class="c3">100</span><span class="c4">100</span><span class="c5">0</span><span class="c6">00000000007B</span></div>
<div class="r" style="top:205px"><u></u><span class="c1">0C</span><span class="c2">Число включений/отключений</span><span class="c3">97</span><span class="c4">97</span><span class="c5">0</span><span class="c6">000000000BDB</span></div>
<div class="r e" style="top:223px"><u></u><span class="c1">BF</span><span class="c2">Ошибки при ударных нагрузках</span><span class="c3">100</span><span class="c4">100</span><span class="c5">0</span><span class="c6">000000000EC1</span></div>
<div class="r" style="top:241px"><u></u><span class="c1">C0</span><span class="c2">Отказы отключения питания</span><span class="c3">100</span><span class="c4">100</span><span class="c5">0</span><span class="c6">000000000146</span></div>
<div class="r e" style="top:259px"><u></u><span class="c1">C2</span><span class="c2">Температура</span><span class="c3">64</span><span class="c4">42</span><span class="c5">0</span><span class="c6">003A000A0024</span></div>
<div class="r" style="top:277px"><u></u><span class="c1">C3</span><span class="c2">Аппаратное ECC-восстановление</span><span class="c3">100</span><span class="c4">100</span><span class="c5">0</span><span class="c6">000000000000</span></div>
<div class="r e" style="top:295px"><u></u><span class="c1">C4</span><span class="c2">События переназначения</span><span class="c3">252</span><span class="c4">252</span><span class="c5">0</span><span class="c6">000000000000</span></div>
<div class="r" style="top:313px"><u></u><span class="c1">C5</span><span class="c2">Нестабильные сектора</span><span class="c3">252</span><span class="c4">252</span><span class="c5">0</span><span class="c6">000000000000</span></div>
<div class="r e" style="top:331px"><u></u><span class="c1">C6</span><span class="c2">Неисправимые ошибки секторов</span><span class="c3">252</span><span class="c4">252</span><span class="c5">0</span><span class="c6">000000000000</span></div>
<div class="r" style="top:349px"><u></u><span class="c1">C7</span><span class="c2">CRC-ошибки UltraDMA</span><span class="c3">200</span><span class="c4">200</span><span class="c5">0</span><span class="c6">000000000000</span></div>
<div class="r e" style="top:367px"><u></u><span class="c1">C8</span><span class="c2">Ошибки записи</span><span class="c3">100</span><span class="c4">100</span><span class="c5">0</span><span class="c6">00000000259C</span></div>
<div class="r" style="top:385px"><u></u><span class="c1">DF</span><span class="c2">Повторы загрузки/выгрузки</span><span class="c3">100</span><span class="c4">100</span><span class="c5">0</span><span class="c6">00000000007B</span></div>
<div class="r e" style="top:403px"><u></u><span class="c1">E1</span><span class="c2">Циклы загрузки/выгрузки</span><span class="c3">94</span><span class="c4">94</span><span class="c5">0</span><span class="c6">00000001A2C7</span></div>
<div id="sb"><svg class="abs" style="left:4px;top:7px" width="9" height="6" viewBox="0 0 9 6"><path d="M0.5 5.5 L4.5 1 L8.5 5.5 Z" fill="#3c3c3c"/></svg><div class="th"><div class="gr"></div></div><svg class="abs" style="left:4px;top:398px" width="9" height="6" viewBox="0 0 9 6"><path d="M0.5 0.5 L4.5 5 L8.5 0.5 Z" fill="#3c3c3c"/></svg></div></div>
<div id="task"></div>
<div class="tbn act" style="left:121px"></div>
<div class="tbn" style="left:307px;border-left:2px solid #46e070"></div>
<div class="tbn" style="left:369px"></div>
<div class="tbn" style="left:431px"></div>
<div class="tbn act" style="left:493px;border-color:#141a22;background:linear-gradient(180deg,#eef1fb 0%,#e0e5f6 45%,#d3daf2 60%,#dde2f6 100%)"></div>
<!-- start orb -->
<svg class="abs" style="left:6px;top:727px" width="42" height="42" viewBox="0 0 42 42"><defs><radialGradient id="og" cx=".5" cy=".95" r=".8"><stop offset="0" stop-color="#4fdcfa"/><stop offset=".3" stop-color="#1b9fd8"/><stop offset=".6" stop-color="#125a9c"/><stop offset="1" stop-color="#163a66"/></radialGradient><linearGradient id="ogl" x1="0" y1="0" x2="0" y2="1"><stop offset="0" stop-color="#dfeaf6" stop-opacity=".8"/><stop offset="1" stop-color="#9fc0e0" stop-opacity=".25"/></linearGradient></defs>
<circle cx="21" cy="21" r="18.4" fill="#1f3550" opacity=".75"/><circle cx="21" cy="21" r="17" fill="url(#og)" stroke="#7fa8cc" stroke-width=".8"/><path d="M4.6 19 A16.4 16.4 0 0 1 37.4 19 Q21 25.6 4.6 19Z" fill="url(#ogl)"/>
<path d="M10.8 11.8 Q15 8.8 19.6 11 L18 19.4 Q13.8 17.2 9.2 20Z" fill="#ee6a2c"/><path d="M21.2 11.6 Q25.4 13.6 30.6 10.8 L28.8 19.2 Q24.4 21.8 19.6 19.8Z" fill="#93c846"/><path d="M8.8 21.8 Q13.2 19 17.6 21.2 L16 29.6 Q11.6 27.4 7.2 30.2Z" fill="#3fa4ea"/><path d="M19.2 21.6 Q23.8 23.6 28.4 20.8 L26.8 29.2 Q22.2 32 17.6 29.8Z" fill="#f9c932"/></svg>
<!-- IE -->
<svg class="abs" style="left:69px;top:726px" width="43" height="43" viewBox="0 0 36 36"><defs><linearGradient id="ieg" x1="0" y1="0" x2="0" y2="1"><stop offset="0" stop-color="#8fdafa"/><stop offset=".5" stop-color="#46b2ee"/><stop offset="1" stop-color="#1f8edc"/></linearGradient></defs>
<path d="M18 8.5 C11.5 8.5 7.5 13 7.5 19 C7.5 25.5 12 29.5 18.4 29.5 C23.2 29.5 26.8 27 28.2 22.8 H22 C21.3 24 20 24.8 18.3 24.8 C15.6 24.8 13.8 23 13.7 20.6 H28.8 C29.4 13.6 25.2 8.5 18 8.5Z M13.8 16.6 C14.2 14.4 15.8 13 18.1 13 C20.4 13 22 14.4 22.3 16.6Z" fill="url(#ieg)" stroke="#1a6cb4" stroke-width=".8"/>
<path d="M30.5 5.2 C27 2.5 19 6 11.5 14.5 C4.5 22.5 2.6 29.6 5.8 31.6 C8 33 11.6 31.2 14 29.4 C11 30.6 8.6 30.6 8 29 C7 26.2 10.4 20 15.6 14.6 C21 9 27 6 29 7.6 C29.8 8.3 29.8 9.6 29.2 11.4 C30.8 9 31.8 6.4 30.5 5.2Z" fill="#f7d145" stroke="#d8a722" stroke-width=".4"/></svg>
<!-- Explorer -->
<svg class="abs" style="left:133px;top:733px" width="36" height="32" viewBox="0 0 36 32"><defs><linearGradient id="fg" x1="0" y1="0" x2="0" y2="1"><stop offset="0" stop-color="#fbe9a6"/><stop offset="1" stop-color="#f0cf6c"/></linearGradient><linearGradient id="bg2" x1="0" y1="0" x2="0" y2="1"><stop offset="0" stop-color="#bfe4f7"/><stop offset="1" stop-color="#5aa6d4"/></linearGradient></defs>
<path d="M3.5 4.5 H13 L14.5 6.5 H32.5 V28 H3.5Z" fill="#f3dc8c" stroke="#c9a545" stroke-width="1"/><rect x="5" y="3" width="4" height="2.4" fill="#3fae3f"/><rect x="14.5" y="5" width="4" height="2.4" fill="#d5402b"/><rect x="22" y="7" width="4" height="2.4" fill="#2f8fdd"/>
<path d="M2.5 9.5 H33.5 V29.5 H2.5Z" fill="url(#fg)" stroke="#cfa947" stroke-width="1"/>
<path d="M7 30 V20 Q7 18 9 18 H27 Q29 18 29 20 V30 H23.5 V23.5 H12.5 V30Z" fill="url(#bg2)" stroke="#3f86b6" stroke-width="1"/><circle cx="9" cy="19.4" r="1.6" fill="#fff"/></svg>
<!-- WMP -->
<svg class="abs" style="left:195px;top:732px" width="36" height="34" viewBox="0 0 36 34"><path d="M22 3 L33 5 V27 L22 29Z" fill="#9cc3e6" stroke="#78a6d0" stroke-width=".7"/><path d="M18 2.5 L29 4 V28 L18 29.6Z" fill="#b9d6ee" stroke="#84aed6" stroke-width=".7"/><path d="M5 2.5 H25 V30 H5Z" fill="#cfe2f4" stroke="#8cb4da" stroke-width=".8"/><path d="M6 26 L24 29 M6 29 H24" stroke="#a9c9e6" stroke-width=".6"/><circle cx="15.4" cy="16" r="9.6" fill="#f28c1e" stroke="#fff" stroke-width="1.6"/><circle cx="15.4" cy="16" r="10.6" fill="none" stroke="#d47412" stroke-width=".5"/><path d="M12 10.4 L21.4 16 L12 21.6Z" fill="#fff"/></svg>
<!-- Opera -->
<svg class="abs" style="left:258px;top:731px" width="34" height="34" viewBox="0 0 34 34"><defs><linearGradient id="opg" x1="0" y1="0" x2="0" y2="1"><stop offset="0" stop-color="#ff3b45"/><stop offset="1" stop-color="#b3061a"/></linearGradient></defs><ellipse cx="17" cy="17" rx="14.2" ry="15" fill="url(#opg)"/><ellipse cx="17" cy="17" rx="6.6" ry="11.6" fill="#a3bbd8"/></svg>
<!-- Chrome -->
<svg class="abs" style="left:321px;top:732px" width="32" height="32" viewBox="0 0 32 32"><circle cx="16" cy="16" r="14.5" fill="#e33b2e"/><path d="M16 16 L3.45 8.75 A14.5 14.5 0 0 0 9.6 29 Z" fill="#2da94f"/><path d="M16 16 L9.6 29 A14.5 14.5 0 0 0 29.7 11.2 L16 11.2Z" fill="#fcc934"/><path d="M16 16 L3.45 8.75 A14.5 14.5 0 0 1 29.7 11.2 L16 11.2 Z" fill="#e33b2e"/><circle cx="16" cy="16" r="6.7" fill="#fff"/><circle cx="16" cy="16" r="5.3" fill="#4285f4"/></svg>
<!-- uTorrent -->
<svg class="abs" style="left:382px;top:731px" width="34" height="34" viewBox="0 0 34 34"><defs><linearGradient id="utg" x1="0" y1="0" x2="0" y2="1"><stop offset="0" stop-color="#8ccf4a"/><stop offset="1" stop-color="#4f9a22"/></linearGradient></defs><circle cx="17" cy="17" r="15.3" fill="url(#utg)" stroke="#4a8d21" stroke-width=".8"/><path d="M10.2 8.5 V25.8 M10.2 17.6 Q10.2 22.4 15.4 22.4 Q20.8 22.4 20.8 17.4 V8.5 M20.8 18.6 Q21 22.4 25 22" fill="none" stroke="#fff" stroke-width="3.6" stroke-linecap="round"/></svg>
<!-- webcam -->
<svg class="abs" style="left:445px;top:733px" width="32" height="32" viewBox="0 0 32 32"><rect x="1" y="1" width="30" height="30" rx="5" fill="#2f78dc"/><circle cx="16" cy="14" r="8.4" fill="#fff"/><circle cx="16" cy="14" r="5" fill="#2f78dc"/><circle cx="16" cy="14" r="2.6" fill="#fff"/><path d="M13.5 22 H18.5 L19.5 25 H24 V27.4 H8 V25 H12.5Z" fill="#fff"/></svg>
<!-- CrystalDiskInfo + UAC shield -->
<div class="abs" style="left:501px;top:736px;width:44px;height:21px;background:linear-gradient(180deg,rgba(150,160,232,.55),rgba(170,180,236,.4))"></div>
<svg class="abs" style="left:507px;top:732px" width="32" height="32" viewBox="0 0 32 32"><defs><linearGradient id="cdb" x1="0" y1="0" x2="1" y2="1"><stop offset="0" stop-color="#3c3cf2"/><stop offset=".45" stop-color="#8f98e6"/><stop offset=".5" stop-color="#4a58b8"/><stop offset="1" stop-color="#2c3a92"/></linearGradient><linearGradient id="cdd" x1="0" y1="0" x2="0" y2="1"><stop offset="0" stop-color="#f6f7f4"/><stop offset="1" stop-color="#c4c8c0"/></linearGradient></defs>
<rect x=".5" y=".5" width="31" height="31" rx="1.5" fill="url(#cdb)"/><path d="M.5 13 L18 7 L31.5 9 V31.5 H.5Z" fill="#2c3a92" opacity=".55"/>
<path d="M1.6 19.6 L10 15.6 H24 L29.6 18.6 V25 L20 29 L1.6 24.4Z" fill="url(#cdd)" stroke="#a9ada4" stroke-width=".5"/><path d="M1.6 19.6 L20 23.6 L29.6 18.6" fill="none" stroke="#b4b8ae" stroke-width=".6"/><rect x="15.4" y="23.8" width="1.6" height="1.6" fill="#3f9a3a"/>
<circle cx="18.2" cy="11.8" r="6.6" fill="#b7cdee" fill-opacity=".9" stroke="#dfe6f2" stroke-width="1.3"/><path d="M13.6 16.8 L6.4 27.6" stroke="#e4e6e2" stroke-width="2" stroke-linecap="round"/><path d="M13.6 16.8 L6.4 27.6" stroke="#9a9e98" stroke-width=".6"/>
<path d="M24.4 17 Q27.6 18.6 30.6 17.6 Q31.4 26 24.4 30.6 Q17.4 26 18.2 17.6 Q21.2 18.6 24.4 17Z" fill="#f2d232" stroke="#fdf6d2" stroke-width=".9"/><path d="M24.4 17.6 V23.6 H18.6 Q18.2 20.4 18.8 18.2 Q21.6 19 24.4 17.6Z" fill="#2f8ad6"/><path d="M24.4 23.6 H30.2 Q29.4 27.4 24.4 30Z" fill="#2f8ad6"/></svg>
<!-- tray -->
<div class="tray" style="left:756px;top:739px;width:28px;letter-spacing:-.8px">EN</div>
<svg class="abs" style="left:793px;top:745px" width="9" height="6" viewBox="0 0 9 6"><path d="M0.3 5.6 L4.5 0.8 L8.7 5.6Z" fill="#fff"/></svg>
<svg class="abs" style="left:812px;top:738px" width="20" height="20" viewBox="0 0 20 20"><path d="M3.2 2 V18" stroke="#3c4858" stroke-width="2.6"/><path d="M3.2 2 V18" stroke="#f2f5f9" stroke-width="1.3"/><path d="M4.4 3 Q7 1.6 9.6 3.2 T15.6 3.4 V10.6 Q12.6 12 9.8 10.6 T4.4 10.4Z" fill="#f2f5f9" stroke="#3c4858" stroke-width=".9"/><circle cx="12.6" cy="12.8" r="4.6" fill="#dc3a30" stroke="#f6d8d4" stroke-width=".9"/><path d="M10.6 10.8 L14.6 14.8 M14.6 10.8 L10.6 14.8" stroke="#fff" stroke-width="1.5"/></svg>
<svg class="abs" style="left:835px;top:737px" width="22" height="22" viewBox="0 0 22 22"><path d="M11.4 3.6 Q14.6 -.4 17.8 2.6 Q20 5.4 16.4 8.6 Q19.6 11.6 19.2 15 Q17.4 19.4 12.8 16.4 Q9.4 20 5.6 18.2 Q3 15.4 6 12.2 Q1 11.2 1.6 8.2 Q3.6 4.4 8.2 6.4 Q9.4 4.6 11.4 3.6Z" fill="#f6821f"/><path d="M8.4 9.4 Q10.8 7.6 12.8 9.2 V14.2 M12.8 11.2 Q8.6 10.8 8.5 13 Q9.2 14.8 12.8 13.4" stroke="#fff" stroke-width="1.3" fill="none"/></svg>
<svg class="abs" style="left:860px;top:738px" width="20" height="20" viewBox="0 0 20 20"><rect x="2.4" y="4.4" width="10.4" height="13.4" rx="1.6" fill="#8396ac" stroke="#3c4858" stroke-width="2.4"/><rect x="2.4" y="4.4" width="10.4" height="13.4" rx="1.6" fill="none" stroke="#f4f6fa" stroke-width="1.3"/><rect x="5.4" y="2.2" width="4.4" height="2.4" fill="#f4f6fa" stroke="#3c4858" stroke-width=".5"/><path d="M8.6 6.8 H16 V10.6 Q16 13.6 12.3 13.6 Q8.6 13.6 8.6 10.6Z" fill="#f4f6fa" stroke="#3c4858" stroke-width=".8"/><path d="M10.4 3.4 V6.8 M14.2 3.4 V6.8" stroke="#3c4858" stroke-width="2.2"/><path d="M10.4 3.6 V6.8 M14.2 3.6 V6.8" stroke="#f4f6fa" stroke-width="1.1"/><path d="M12.3 13.6 V18" stroke="#3c4858" stroke-width="2.4"/><path d="M12.3 13.6 V17.6" stroke="#f4f6fa" stroke-width="1.2"/></svg>
<svg class="abs" style="left:885px;top:741px" width="18" height="15" viewBox="0 0 18 15"><g fill="#f6f8fb" stroke="#3c4858" stroke-width=".8"><rect x=".6" y="10.4" width="3" height="3.4"/><rect x="4" y="8.2" width="3" height="5.6"/><rect x="7.4" y="6" width="3" height="7.8"/><rect x="10.8" y="3.6" width="3" height="10.2"/><rect x="14.2" y="1" width="3" height="12.8"/></g></svg>
<svg class="abs" style="left:908px;top:738px" width="20" height="20" viewBox="0 0 20 20"><path d="M1.6 7.2 H4.4 L8.8 2.6 V17.4 L4.4 12.8 H1.6Z" fill="#f4f6fa" stroke="#3c4858" stroke-width=".9"/><path d="M11 7 Q12.8 10 11 13 M13.4 5 Q16.6 10 13.4 15 M15.8 3.4 Q19.8 10 15.8 16.6" fill="none" stroke="#3c4858" stroke-width="2" stroke-linecap="round" opacity=".55"/><path d="M11 7 Q12.8 10 11 13 M13.4 5 Q16.6 10 13.4 15 M15.8 3.4 Q19.8 10 15.8 16.6" fill="none" stroke="#f4f6fa" stroke-width="1.1" stroke-linecap="round"/></svg>
<div class="tray" style="left:936px;top:734px;width:70px;letter-spacing:-.45px">14:36</div>
<div class="tray" style="left:935px;top:751px;width:70px;letter-spacing:-.45px">03.06.2017</div>
<div class="abs" style="left:1010px;top:729px;width:14px;height:39px;border-left:1px solid #33425a;box-shadow:inset 1px 0 0 rgba(255,255,255,.45),inset 0 1px 0 rgba(255,255,255,.45);background:linear-gradient(180deg,#8b9eb6 0%,#788ba4 45%,#64778f 50%,#768aa3 100%)"></div>
</body>
</html>
